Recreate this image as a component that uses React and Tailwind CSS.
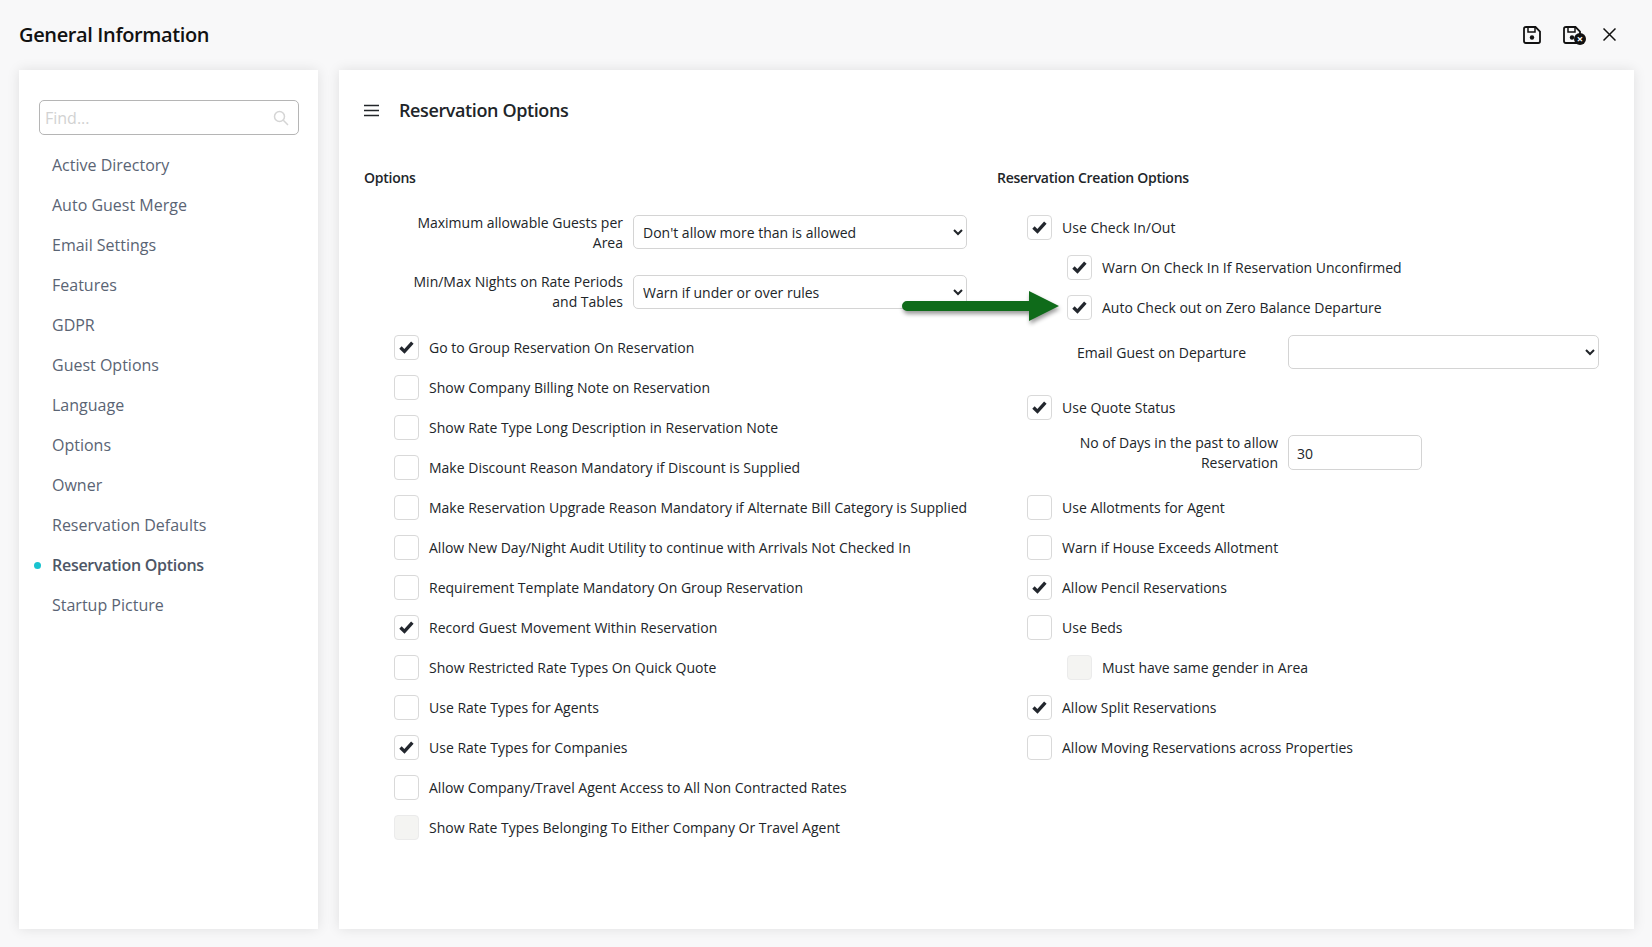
import React from 'react';

const NAV = ['Active Directory', 'Auto Guest Merge', 'Email Settings', 'Features', 'GDPR', 'Guest Options', 'Language', 'Options', 'Owner', 'Reservation Defaults', 'Reservation Options', 'Startup Picture'];

const LEFT_CHECKS = [
  ['Go to Group Reservation On Reservation', true],
  ['Show Company Billing Note on Reservation', false],
  ['Show Rate Type Long Description in Reservation Note', false],
  ['Make Discount Reason Mandatory if Discount is Supplied', false],
  ['Make Reservation Upgrade Reason Mandatory if Alternate Bill Category is Supplied', false],
  ['Allow New Day/Night Audit Utility to continue with Arrivals Not Checked In', false],
  ['Requirement Template Mandatory On Group Reservation', false],
  ['Record Guest Movement Within Reservation', true],
  ['Show Restricted Rate Types On Quick Quote', false],
  ['Use Rate Types for Agents', false],
  ['Use Rate Types for Companies', true],
  ['Allow Company/Travel Agent Access to All Non Contracted Rates', false],
  ['Show Rate Types Belonging To Either Company Or Travel Agent', false, true],
];

function Check({ label, checked, disabled, nested }) {
  return (
    <div className={`flex h-10 items-center ${nested ? 'pl-[70px]' : 'pl-[30px]'}`}>
      <span className={`flex h-[25px] w-[25px] shrink-0 items-center justify-center rounded-[4px] border ${disabled ? 'border-[#ebebeb] bg-[#f4f4f2]' : 'border-[#d9d9d9] bg-white'}`}>
        {checked && (
          <svg viewBox="0 0 16 14" fill="none" stroke="#23272e" strokeWidth="3.6" className="h-[13px] w-[15px]">
            <path d="M1.500 7l4.300 4.200 8.500-9.500" />
          </svg>
        )}
      </span>
      <span className="ml-[10px] whitespace-nowrap text-[#212529]">{label}</span>
    </div>
  );
}

function Select({ value, className }) {
  return (
    <select defaultValue={value} className={`h-[34px] rounded-[5px] border border-[#d4d4d4] bg-white pl-[5px] text-[14px] text-[#212529] ${className}`}>
      <option value={value}>{value}</option>
    </select>
  );
}

function SaveIcon({ className }) {
  return (
    <svg viewBox="0 0 18 18" fill="none" stroke="currentColor" strokeWidth="1.8" className={className}>
      <path d="M2.500 1h10l4.500 4.500v9.800a1.700 1.700 0 0 1-1.700 1.700H2.700A1.700 1.700 0 0 1 1 15.300V2.700A1.700 1.700 0 0 1 2.700 1z" />
      <path d="M5 1v5h7V1" strokeWidth="1.500" />
      <circle cx="9" cy="11.500" r="2.200" fill="currentColor" stroke="none" />
    </svg>
  );
}

export default function App() {
  return (
    <div className="relative flex h-[947px] w-[1652px] flex-col overflow-hidden bg-[#f8f8f9] font-['Open_Sans',sans-serif] text-[14px]">
      {/* Header */}
      <div className="flex h-[70px] items-center justify-between pb-[1px] pl-[19px] pr-[36px]">
        <h1 className="text-[20px] font-semibold tracking-[-0.37px] text-[#111]">General Information</h1>
        <div className="flex items-center text-[#111]">
          <SaveIcon className="h-[18px] w-[18px]" />
          <div className="relative ml-[22px] h-[18px] w-[18px]">
            <SaveIcon className="h-[18px] w-[18px]" />
            <span className="absolute -bottom-[1px] -right-[5px] flex h-[12px] w-[12px] items-center justify-center rounded-full bg-[#111] text-[11px] font-bold leading-none text-white">×</span>
          </div>
          <svg viewBox="0 0 13 13" stroke="currentColor" strokeWidth="1.5" className="ml-[22px] h-[13px] w-[13px]">
            <path d="M0.500 0.500l12 12M12.500 0.500l-12 12" />
          </svg>
        </div>
      </div>

      <div className="flex h-[859px] gap-[21px] pl-[19px]">
        {/* Sidebar */}
        <aside className="w-[299px] bg-white px-5 pt-[30px] shadow-[0_0_12px_rgba(0,0,0,0.1)]">
          <div className="relative h-[35px] w-[260px] rounded-[5px] border border-[#b5b5b5]">
            <span className="absolute left-[5px] top-[5px] text-[16px] text-[#d2d2d2]">Find...</span>
            <svg viewBox="0 0 16 16" fill="none" stroke="#d5d5d5" strokeWidth="1.5" className="absolute right-[9px] top-[9px] h-4 w-4">
              <circle cx="6.500" cy="6.500" r="5" />
              <path d="M10.300 10.300l4.700 4.700" />
            </svg>
          </div>
          <nav className="mt-[10px]">
            {NAV.map((item) => {
              const active = item === 'Reservation Options';
              return (
                <div key={item} className={`relative flex h-10 items-center pl-[13px] text-[16px] ${active ? 'font-semibold tracking-[-0.28px] text-[#4d5666]' : 'text-[#5a6474]'}`}>
                  {active && <span className="absolute -left-[5px] top-[17px] h-[7px] w-[7px] rounded-full bg-[#19c3cf]" />}
                  {item}
                </div>
              );
            })}
          </nav>
        </aside>

        {/* Main panel */}
        <main className="w-[1295px] bg-white pl-[25px] pt-[24px] shadow-[0_0_12px_rgba(0,0,0,0.1)]">
          <div className="flex h-[33px] items-center">
            <svg viewBox="0 0 15 13" stroke="#212529" strokeWidth="1.700" className="h-[13px] w-[15px]">
              <path d="M0 1.500h15M0 6.500h15M0 11.500h15" />
            </svg>
            <h2 className="ml-[20px] text-[18px] font-semibold tracking-[-0.39px] text-[#212529]">Reservation Options</h2>
          </div>

          <div className="mt-[40px] flex">
            {/* Left column */}
            <section className="w-[633px]">
              <h3 className="h-[21px] font-semibold leading-[21px] tracking-[-0.26px] text-[#212529]">Options</h3>
              <div className="mt-[27px] flex h-[34px] w-[603px] items-center">
                <label className="relative top-[1px] ml-[33px] w-[226px] text-right leading-[20px] text-[#212529]">Maximum allowable Guests per Area</label>
                <Select value="Don't allow more than is allowed" className="ml-[10px] w-[334px]" />
              </div>
              <div className="mt-[26px] flex h-[34px] w-[603px] items-center">
                <label className="ml-[33px] w-[226px] text-right leading-[20px] text-[#212529]">Min/Max Nights on Rate Periods and Tables</label>
                <Select value="Warn if under or over rules" className="ml-[10px] w-[334px]" />
              </div>
              <div className="mt-[18px]">
                {LEFT_CHECKS.map(([label, checked, disabled]) => (
                  <Check key={label} label={label} checked={checked} disabled={disabled} />
                ))}
              </div>
            </section>

            {/* Right column */}
            <section className="w-[602px]">
              <h3 className="h-[21px] font-semibold leading-[21px] tracking-[-0.26px] text-[#212529]">Reservation Creation Options</h3>
              <div className="mt-[19px]">
                <Check label="Use Check In/Out" checked />
                <Check label="Warn On Check In If Reservation Unconfirmed" checked nested />
                <Check label="Auto Check out on Zero Balance Departure" checked nested />
              </div>
              <div className="mt-[8px] flex h-[34px] items-center">
                <label className="ml-[80px] w-[211px] text-[#212529]">Email Guest on Departure</label>
                <Select value="" className="w-[311px]" />
              </div>
              <div className="mt-[18px]">
                <Check label="Use Quote Status" checked />
              </div>
              <div className="mt-[1px] flex h-[48px] items-center">
                <label className="relative top-[1px] ml-[55px] w-[226px] text-right leading-[20px] text-[#212529]">No of Days in the past to allow Reservation</label>
                <div className="ml-[10px] flex h-[35px] w-[134px] items-center rounded-[5px] border border-[#d4d4d4] pl-2 pt-[2px] text-[#212529]">30</div>
              </div>
              <div className="mt-[11px]">
                <Check label="Use Allotments for Agent" />
                <Check label="Warn if House Exceeds Allotment" />
                <Check label="Allow Pencil Reservations" checked />
                <Check label="Use Beds" />
                <Check label="Must have same gender in Area" nested disabled />
                <Check label="Allow Split Reservations" checked />
                <Check label="Allow Moving Reservations across Properties" />
              </div>
            </section>
          </div>
        </main>
      </div>

      {/* Arrow callout */}
      <svg viewBox="0 0 157 30" className="absolute left-[902px] top-[291px] h-[30px] w-[157px] overflow-visible drop-shadow-[1px_3px_2px_rgba(0,0,0,0.4)]">
        <path d="M5 10h122V0l30 15-30 15V20H5a5 5 0 0 1 0-10z" fill="#0f6b1a" />
      </svg>
    </div>
  );
}
